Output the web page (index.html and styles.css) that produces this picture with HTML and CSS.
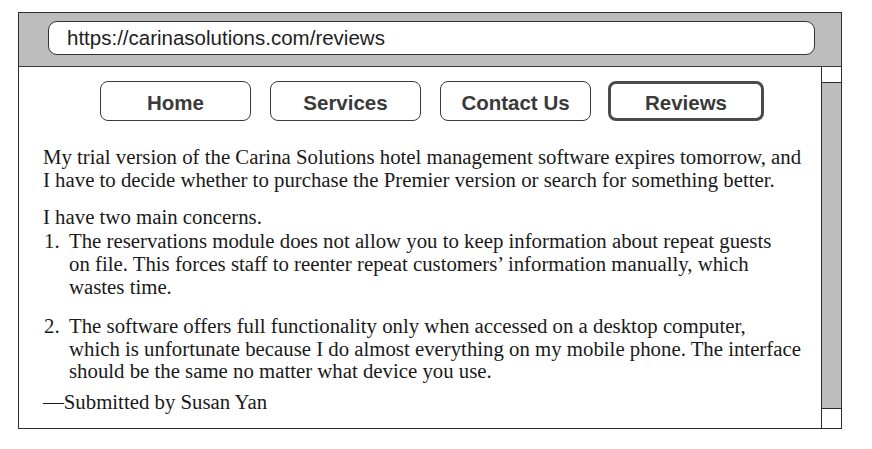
FILE: index.html
```html
<!DOCTYPE html>
<html>
<head>
<meta charset="utf-8">
<link rel="stylesheet" href="styles.css">
</head>
<body>
<div class="window">
  <div class="toolbar">
    <div class="url">https://carinasolutions.com/reviews</div>
  </div>
  <div class="main">
    <div class="content">
      <nav class="nav">
        <span class="btn">Home</span>
        <span class="btn">Services</span>
        <span class="btn">Contact Us</span>
        <span class="btn active">Reviews</span>
      </nav>
      <div class="text">
        <p class="intro">My trial version of the Carina Solutions hotel management software expires tomorrow, and<br>I have to decide whether to purchase the Premier version or search for something better.</p>
        <p class="lead">I have two main concerns.</p>
        <ol class="list">
          <li><span class="num">1.</span><span class="item">The reservations module does not allow you to keep information about repeat guests<br>on file. This forces staff to reenter repeat customers’ information manually, which<br>wastes time.</span></li>
          <li><span class="num">2.</span><span class="item">The software offers full functionality only when accessed on a desktop computer,<br>which is unfortunate because I do almost everything on my mobile phone. The interface<br>should be the same no matter what device you use.</span></li>
        </ol>
        <p class="sign">—Submitted by Susan Yan</p>
      </div>
    </div>
    <div class="scrollbar">
      <div class="sb-end"></div>
      <div class="sb-track"></div>
      <div class="sb-end bottom"></div>
    </div>
  </div>
</div>
</body>
</html>
```
FILE: styles.css
```css
html, body {
  margin: 0;
  padding: 0;
  background: #ffffff;
}
body {
  padding: 12px 0 0 18px;
}
.window {
  width: 824px;
  height: 417px;
  box-sizing: border-box;
  border: 1.5px solid #2e2e2e;
  display: flex;
  flex-direction: column;
}
.toolbar {
  height: 54px;
  box-sizing: border-box;
  background: #bdbdbd;
  border-bottom: 1.5px solid #3a3a3a;
  padding: 8px 0 0 29px;
}
.url {
  width: 767px;
  height: 34px;
  box-sizing: border-box;
  background: #ffffff;
  border: 1.5px solid #333333;
  border-radius: 9px;
  padding-left: 18px;
  font-family: "Liberation Sans", Arial, sans-serif;
  font-size: 20.5px;
  line-height: 32px;
  color: #1e1e1e;
  white-space: nowrap;
}
.main {
  flex: 1;
  display: flex;
  min-height: 0;
}
.content {
  flex: 1;
  min-width: 0;
}
.nav {
  display: flex;
  padding: 14px 0 0 81px;
  gap: 19px;
}
.btn {
  width: 151px;
  height: 40px;
  box-sizing: border-box;
  border: 1.5px solid #3a3a3a;
  border-radius: 8px;
  display: flex;
  align-items: center;
  justify-content: center;
  padding-top: 3px;
  font-family: "Liberation Sans", Arial, sans-serif;
  font-weight: bold;
  font-size: 20.5px;
  color: #3a3a3a;
}
.btn.active {
  width: 156px;
  border: 3.5px solid #4a4a4a;
  margin-left: -2px;
}
.text {
  padding: 0 0 0 24px;
  font-family: "Liberation Serif", "Times New Roman", serif;
  font-size: 20.8px;
  line-height: 22.8px;
  color: #1a1a1a;
  white-space: nowrap;
}
.text p {
  margin: 0;
}
.intro {
  margin-top: 25px !important;
}
.lead {
  margin-top: 14px !important;
}
.list {
  list-style: none;
  margin: 2px 0 0 0;
  padding: 0;
}
.list li {
  display: flex;
}
.list li + li {
  margin-top: 16px;
}
.num {
  width: 25px;
  flex: none;
  padding-left: 1px;
}
.item {
  flex: 1;
}
.sign {
  margin-top: 8px !important;
}
.scrollbar {
  width: 20px;
  flex: none;
  box-sizing: border-box;
  border-left: 1.5px solid #2e2e2e;
  display: flex;
  flex-direction: column;
}
.sb-end {
  height: 15px;
  background: #ffffff;
  border-bottom: 1.5px solid #2e2e2e;
}
.sb-end.bottom {
  height: 19px;
  border-bottom: none;
  border-top: 1.5px solid #2e2e2e;
}
.sb-track {
  flex: 1;
  background: #bdbdbd;
}
```
